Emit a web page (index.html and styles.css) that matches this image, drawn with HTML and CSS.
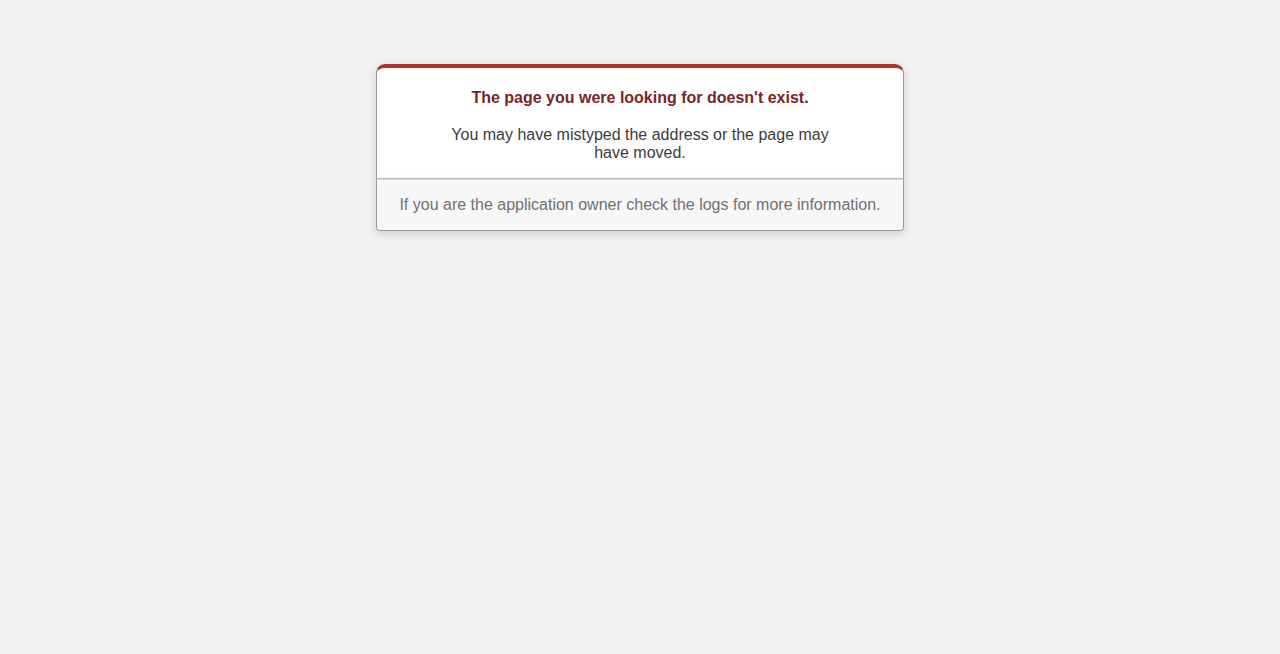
FILE: index.html
```html
<!DOCTYPE html>
<html>
<head>
<meta charset="utf-8">
<title>The page you were looking for doesn't exist (404)</title>
<link rel="stylesheet" href="styles.css">
</head>
<body class="rails-default-error-page">
  <div class="dialog">
    <div class="dialog-body">
      <h1 class="dialog-title">The page you were looking for doesn't exist.</h1>
      <p class="dialog-text">You may have mistyped the address or the page may have moved.</p>
    </div>
    <p class="dialog-footer">If you are the application owner check the logs for more information.</p>
  </div>
</body>
</html>
```
FILE: styles.css
```css
html, body {
  margin: 0;
}
.rails-default-error-page {
  background-color: #F1F1F1;
  color: #2E2F30;
  text-align: center;
  font-family: "Liberation Sans", Arial, sans-serif;
  font-size: 16px;
  margin: 0;
  min-height: 654px;
}
.dialog {
  width: 95%;
  max-width: 33em;
  margin: 4em auto 0;
}
.dialog-body {
  border: 1px solid #CCC;
  border-right-color: #999;
  border-left-color: #999;
  border-bottom-color: #BBB;
  border-top: #B0322A solid 4px;
  border-top-left-radius: 9px;
  border-top-right-radius: 9px;
  background-color: white;
  padding: 7px 12% 0;
  box-shadow: 0 3px 8px rgba(50, 50, 50, 0.17);
}
.dialog-title {
  font-size: 100%;
  color: #7A2528;
  line-height: 1.5em;
  margin: 0.67em 0;
}
.dialog-text {
  margin: 1em 0;
  color: #3C3C3C;
  line-height: 18px;
}
.dialog-footer {
  margin: 0 0 1em;
  padding: 1em;
  line-height: 18px;
  background-color: #F7F7F7;
  border: 1px solid #CCC;
  border-right-color: #999;
  border-left-color: #999;
  border-bottom-color: #999;
  border-bottom-left-radius: 4px;
  border-bottom-right-radius: 4px;
  border-top-color: #DADADA;
  color: #717171;
  box-shadow: 0 3px 8px rgba(50, 50, 50, 0.17);
}
```
